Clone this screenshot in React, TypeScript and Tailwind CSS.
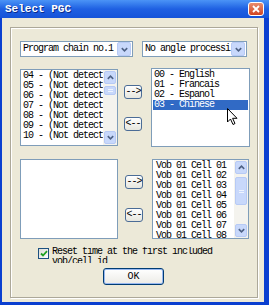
import React from "react";

const Chevron = ({ dir = "down" }: { dir?: "up" | "down" }) => (
    <svg width="7" height="5" viewBox="0 0 7 5">
        <path
            d={dir === "down" ? "M0.8 1.2 L3.5 3.8 L6.2 1.2" : "M0.8 3.8 L3.5 1.2 L6.2 3.8"}
            fill="none"
            stroke="#4D6185"
            strokeWidth="1.6"
        />
    </svg>
);

const ArrowBox = ({ dir }: { dir: "up" | "down" }) => (
    <div className="flex h-[13px] w-full items-center justify-center rounded-[2px] border border-[#B7CAF5] bg-[#C8D8FB]">
        <Chevron dir={dir} />
    </div>
);

const Combo = ({ text, className }: { text: string; className: string }) => (
    <div className={`flex h-[16px] items-center border border-[#7F9DB9] bg-white ${className}`}>
        <span className="flex-1 overflow-hidden whitespace-nowrap pl-[2px] text-[10px] leading-[14px] tracking-[-1px] text-black">
            {text}
        </span>
        <span className="mr-px flex h-[14px] w-[14px] items-center justify-center rounded-[2px] border border-[#B7CAF5] bg-[#C8D8FB]">
            <Chevron />
        </span>
    </div>
);

const ScrollBar = ({ thumbTop, thumbH }: { thumbTop: string; thumbH: string }) => (
    <div className="flex h-full w-[14px] flex-col bg-[#F4F3EE] p-px">
        <ArrowBox dir="up" />
        <div className={`${thumbTop} ${thumbH} flex w-full flex-col items-center justify-center gap-px rounded-[2px] border border-[#B7CAF5] bg-[#C8D8FB]`}>
            <span className="h-px w-[5px] bg-[#EEF4FE]" />
            <span className="h-px w-[5px] bg-[#EEF4FE]" />
        </div>
        <div className="flex-1" />
        <ArrowBox dir="down" />
    </div>
);

const XpButton = ({ label, className }: { label: string; className: string }) => (
    <button className={`flex h-[14px] w-[18px] items-center justify-center rounded-[3px] border border-[#4B6C96] bg-gradient-to-b from-white to-[#E6E6DE] text-[10px] leading-none tracking-[-1px] text-black ${className}`}>
        {label}
    </button>
);

const Row = ({ children, selected }: { children: React.ReactNode; selected?: boolean }) => (
    <div
        className={`h-[10px] whitespace-nowrap text-[10px] leading-[10px] tracking-[-1px] ${
            selected ? "bg-[#316AC5] text-white" : "text-black"
        }`}
    >
        {children}
    </div>
);

export default function App() {
    const pgcs = ["04", "05", "06", "07", "08", "09", "10"];
    const langs = ["00 - English", "01 - Francais", "02 - Espanol", "03 - Chinese"];
    const cells = ["01", "02", "03", "04", "05", "06", "07", "08"];

    return (
        <div className="h-[305px] w-[271px] bg-white font-['Liberation_Mono',monospace]">
            <div className="flex h-[305px] w-[269px] flex-col bg-[#0A3FD0]">
                <div className="flex h-[18px] items-center justify-between bg-gradient-to-b from-[#4B93F6] via-[#1F60E2] to-[#1553D9] pl-[5px] pr-[5px]">
                    <span className="text-[11px] font-bold leading-none text-white [text-shadow:1px_1px_0_#0A2C8A]">
                        Select PGC
                    </span>
                    <span className="flex h-[14px] w-[16px] items-center justify-center rounded-[3px] border border-white bg-gradient-to-b from-[#E88C6E] to-[#D0431F]">
                        <svg width="8" height="8" viewBox="0 0 8 8">
                            <path d="M1 1 L7 7 M7 1 L1 7" stroke="white" strokeWidth="1.8" />
                        </svg>
                    </span>
                </div>

                <div className="mb-[3px] ml-[2px] mr-[5px] flex flex-1 bg-[#ECE9D8] pb-[4px] pl-[8px] pr-[6px] pt-[9px]">
                    <div className="relative flex flex-1 flex-col border border-[#ACA899] pl-[9px] shadow-[inset_1px_1px_0_#fff,1px_1px_0_#fff]">
                        <div className="mt-[13px] flex h-[16px]">
                            <Combo text="Program chain no.1" className="w-[113px]" />
                            <Combo text="No angle processi" className="ml-[9px] w-[105px]" />
                        </div>

                        <div className="mt-[11px] flex h-[79px] items-center">
                            <div className="flex h-[77px] w-[98px] border border-[#7F9DB9] bg-white">
                                <div className="flex-1 overflow-hidden pl-[2px] pt-px">
                                    {pgcs.map((n) => (
                                        <Row key={n}>{n} - (Not detect</Row>
                                    ))}
                                </div>
                                <ScrollBar thumbTop="mt-[2px]" thumbH="h-[9px]" />
                            </div>
                            <div className="ml-[6px] flex h-full flex-col">
                                <XpButton label="-->" className="mt-[17px]" />
                                <XpButton label="<--" className="mt-[18px]" />
                            </div>
                            <div className="ml-[9px] h-[79px] w-[99px] border border-[#7F9DB9] bg-white p-px">
                                {langs.map((l, i) => (
                                    <Row key={l} selected={i === 3}>
                                        <span className="pl-px">{l}</span>
                                    </Row>
                                ))}
                            </div>
                        </div>

                        <div className="mt-[12px] flex h-[80px]">
                            <div className="h-[80px] w-[98px] border border-[#7F9DB9] bg-white" />
                            <div className="ml-[7px] flex h-full flex-col">
                                <XpButton label="-->" className="mt-[16px] w-[17px]" />
                                <XpButton label="<--" className="mt-[19px] w-[17px]" />
                            </div>
                            <div className="ml-[9px] flex h-[80px] w-[97px] border border-[#7F9DB9] bg-white">
                                <div className="flex-1 overflow-hidden pl-[3px] pt-px">
                                    {cells.map((c) => (
                                        <Row key={c}>Vob 01 Cell {c}</Row>
                                    ))}
                                </div>
                                <ScrollBar thumbTop="mt-[3px]" thumbH="h-[28px]" />
                            </div>
                        </div>

                        <div className="ml-[18px] mt-[8px] flex h-[16px] items-start overflow-hidden">
                            <span className="mt-px flex h-[11px] w-[11px] shrink-0 items-center justify-center border border-[#1C5180] bg-gradient-to-br from-[#DCDCD7] to-white">
                                <svg width="8" height="7" viewBox="0 0 8 7">
                                    <path d="M1 3.5 L3 5.5 L7 1.2" fill="none" stroke="#21A121" strokeWidth="1.8" />
                                </svg>
                            </span>
                            <span className="ml-[3px] w-[165px] text-[10px] leading-[10px] tracking-[-1px] text-black">
                                Reset time at the first included vob/cell id
                            </span>
                        </div>

                        <div className="mt-[5px] flex justify-center pr-[10px]">
                            <button className="flex h-[17px] w-[61px] items-center justify-center rounded-[3px] border border-[#003C74] bg-gradient-to-b from-white to-[#ECEBE6] text-[10px] leading-none text-black shadow-[inset_0_0_0_1px_#98B8F0]">
                                OK
                            </button>
                        </div>

                        <svg
                            className="absolute left-[216px] top-[80px]"
                            width="11"
                            height="18"
                            viewBox="0 0 11 18"
                        >
                            <path
                                d="M0.5 0.5 L0.5 14 L3.5 11 L6 16.5 L8 15.5 L5.6 10.3 L10 10.3 Z"
                                fill="white"
                                stroke="black"
                                strokeWidth="1"
                            />
                        </svg>
                    </div>
                </div>
            </div>
        </div>
    );
}
